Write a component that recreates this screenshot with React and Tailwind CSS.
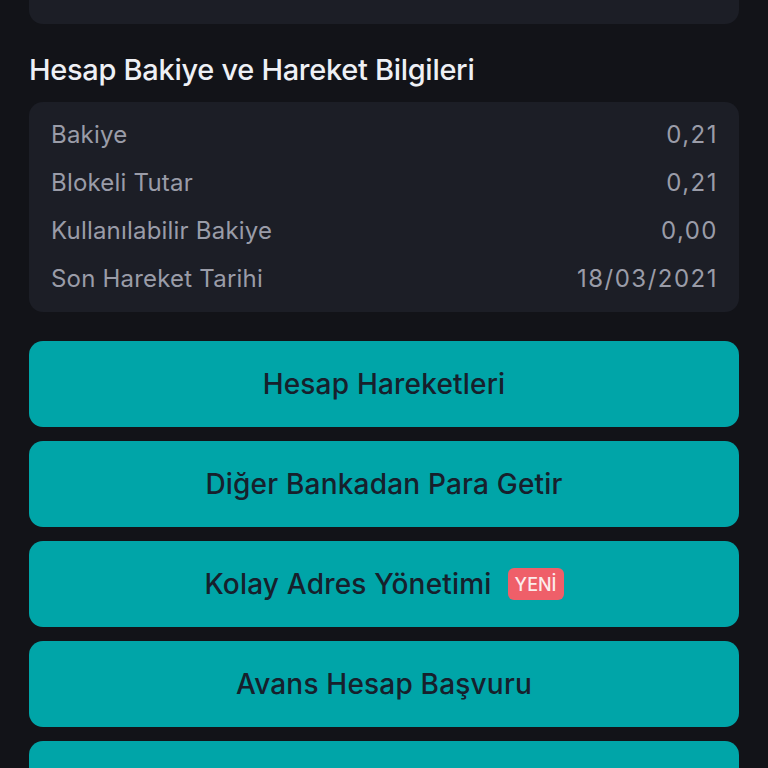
import React from "react";

const rows = [
  ["Bakiye", "0,21"],
  ["Blokeli Tutar", "0,21"],
  ["Kullanılabilir Bakiye", "0,00"],
  ["Son Hareket Tarihi", "18/03/2021"],
];

const buttons = [
  { label: "Hesap Hareketleri" },
  { label: "Diğer Bankadan Para Getir" },
  { label: "Kolay Adres Yönetimi", badge: "YENİ" },
  { label: "Avans Hesap Başvuru" },
  { label: "Hesap Kapama" },
];

export default function App() {
  return (
    <div
      className="w-[768px] h-[768px] overflow-hidden bg-[#121318] px-[29px]"
      style={{ fontFamily: "Inter, 'Noto Sans', sans-serif" }}
    >
      <div className="-mt-[40px] h-[64px] rounded-[14px] bg-[#1c1e26] px-[22px] pt-[2px] text-[22px] text-[#9a9ca8] leading-[36px]">
        Hesap Türü
      </div>
      <h2 className="mt-[28px] text-[29px] font-medium text-[#eef0f5] leading-[36px] tracking-[-0.3px]">
        Hesap Bakiye ve Hareket Bilgileri
      </h2>
      <div className="mt-[14px] rounded-[14px] bg-[#1c1e26] px-[22px] py-[9px] flex flex-col">
        {rows.map(([k, v]) => (
          <div key={k} className="flex justify-between items-center h-[48px] text-[24px] text-[#9a9ca8] tracking-[0.2px]">
            <span>{k}</span>
            <span className="tracking-[1.5px] -mr-[1px]">{v}</span>
          </div>
        ))}
      </div>
      <div className="mt-[29px] flex flex-col gap-[14px]">
        {buttons.map((b) => (
          <div
            key={b.label}
            className="h-[86px] shrink-0 rounded-[14px] bg-[#00a5a8] flex items-center justify-center gap-[16px] text-[28px] font-medium text-[#17202c] tracking-[0.2px]"
          >
            <span>{b.label}</span>
            {b.badge && (
              <span className="rounded-[6px] bg-[#ef5f69] px-[7px] h-[32px] flex items-center text-[18px] font-medium text-[#fbecec] tracking-normal">
                {b.badge}
              </span>
            )}
          </div>
        ))}
      </div>
    </div>
  );
}
